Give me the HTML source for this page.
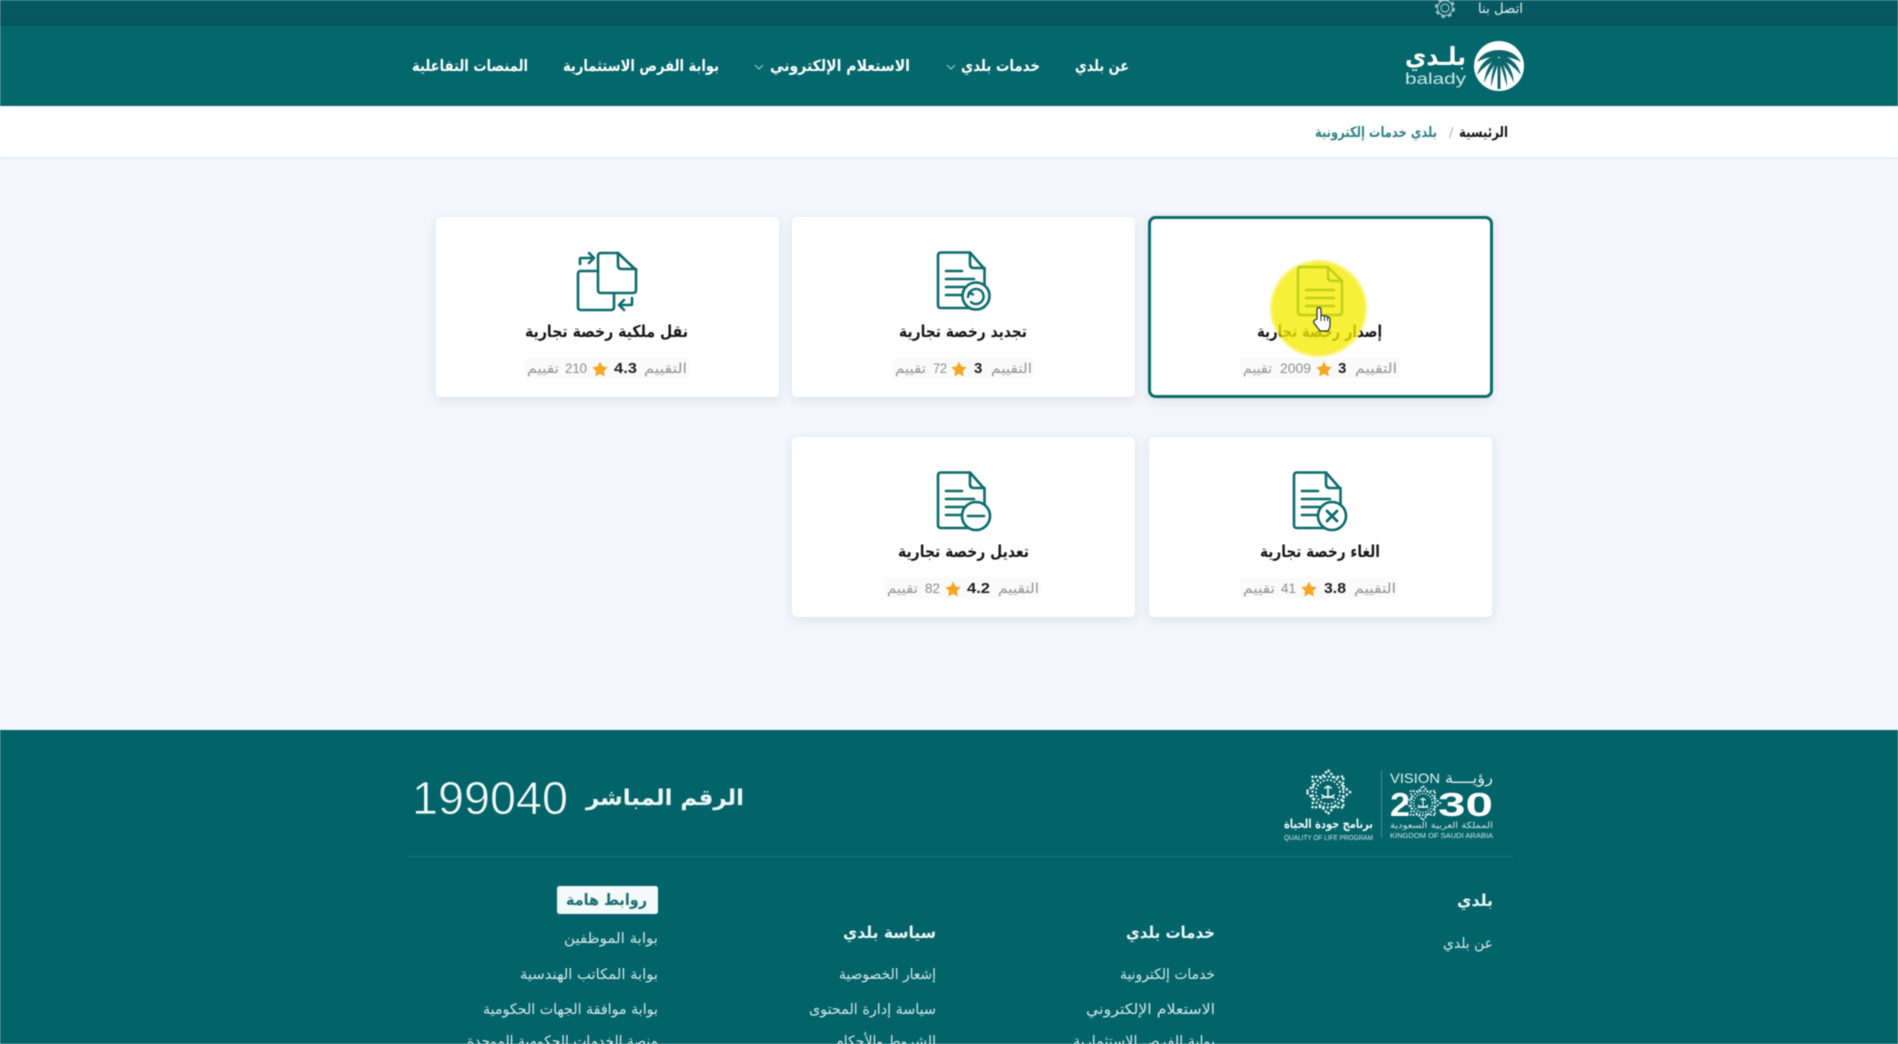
<!DOCTYPE html>
<html lang="ar"><head><meta charset="utf-8"><title>بلدي</title>
<style>
html,body{margin:0;padding:0;width:1898px;height:1044px;overflow:hidden;background:#f4f6fb}
svg{display:block;filter:blur(.5px)}
text{font-family:"DejaVu Sans","Liberation Sans",sans-serif;white-space:pre}
.n{fill:#fff;font-size:15.5px;font-weight:700}
.t{fill:#161616;font-size:16.5px;font-weight:700}
.l{fill:#929292;font-size:13.5px}
.d{fill:#8c8c8c;font-size:13.5px;font-family:"Liberation Sans",sans-serif}
.v{fill:#1c1c1c;font-size:15px;font-weight:700;font-family:"Liberation Sans",sans-serif}
.h{fill:#eef7f7;font-size:16.5px;font-weight:700}
.f{fill:#d3e8e9;font-size:14.5px}
.i{fill:none;stroke:#0c6b6c;stroke-width:2.6;stroke-linecap:round;stroke-linejoin:round}
</style></head><body>
<svg width="1898" height="1044" viewBox="0 0 1898 1044" xmlns="http://www.w3.org/2000/svg">
<defs>
<linearGradient id="top" x1="0" y1="0" x2="0" y2="1"><stop offset="0" stop-color="#075a63"/><stop offset="1" stop-color="#04575f"/></linearGradient>
<radialGradient id="yel"><stop offset="0" stop-color="#f4ec00"/><stop offset=".92" stop-color="#f4ec00"/><stop offset="1" stop-color="#f4ec00" stop-opacity=".35"/></radialGradient>
<filter id="sh" x="-10%" y="-10%" width="120%" height="125%"><feDropShadow dx="0" dy="3" stdDeviation="5" flood-color="#2a4060" flood-opacity=".12"/></filter>
<g id="doc" class="i"><path d="M4 1.5H33L47.5 18V54Q47.5 57 44.5 57H4Q1 57 1 54V4.5Q1 1.5 4 1.5Z"/><path d="M33 1.5V13Q33 17 37 17H47.5"/><path d="M9 20H25M9 28H37M9 36H27M9 44H25"/></g>
<g id="star" fill="none" stroke="#e4f1f1" stroke-linecap="round">
<polygon points="22,0 14.8,6.1 15.600,15.600 6.100,14.800 0,22 -6.100,14.800 -15.600,15.600 -14.800,6.100 -22,0 -14.800,-6.100 -15.600,-15.600 -6.100,-14.800 0,-22 6.100,-14.800 15.600,-15.600 14.800,-6.100" stroke-width="2.600" stroke-dasharray=".1 4"/>
<circle r="15.500" stroke-width="2.400" stroke-dasharray=".1 4"/>
<circle r="12" stroke-width="2" stroke-dasharray=".1 3.600"/>
<path d="M0 -6V3M-3 -4Q0 -7 3 -4M-6 3Q0 8 6 3M-6 6Q0 3 6 6" stroke-width="1.700"/>
</g>
</defs>

<rect width="1898" height="1044" fill="#f4f6fb"/>
<!-- header -->
<rect width="1898" height="27" fill="url(#top)"/>
<rect y="26" width="1898" height="80" fill="#04676c"/>
<rect y="106" width="1898" height="52" fill="#fff"/>
<rect y="157" width="1898" height="2" fill="#e9ecf1"/>

<text x="1478" y="13" textLength="45" lengthAdjust="spacingAndGlyphs" style="fill:#e6f2f2;font-size:13.5px">اتصل بنا</text>
<g fill="none" stroke="#9cc3c5"><circle cx="1445" cy="8" r="4" stroke-width="1.2"/><circle cx="1445" cy="8" r="7.5" stroke-width="1.2"/><circle cx="1445" cy="8" r="9" stroke-width="2.2" stroke-dasharray="3.5 3.6"/></g>

<!-- logo -->
<circle cx="1499" cy="66" r="25" fill="#fff"/>
<g fill="#0b666c">
<path d="M1497.500 89V58H1500.500V89Z"/>
<path d="M1499 50Q1484 50 1477 62Q1488 56 1499 57Q1510 56 1521 62Q1514 50 1499 50Z"/>
<path d="M1498 55Q1482 58 1477 75Q1486 64 1498 59Z"/>
<path d="M1500 55Q1516 58 1521 75Q1512 64 1500 59Z"/>
<path d="M1498 57Q1486 64 1484 83Q1490 69 1498.500 61Z"/>
<path d="M1500 57Q1512 64 1514 83Q1508 69 1499.500 61Z"/>
<path d="M1498 59Q1491 69 1491 87Q1495 72 1498.500 63Z"/>
<path d="M1500 59Q1507 69 1507 87Q1503 72 1499.500 63Z"/>
</g>
<text x="1405" y="65" textLength="61" lengthAdjust="spacingAndGlyphs" style="fill:#fff;font-size:25px;font-weight:700">بلـدي</text>
<text x="1405" y="84" textLength="61" lengthAdjust="spacingAndGlyphs" style="fill:#cfe6e6;font-size:15.5px;font-family:'Liberation Sans',sans-serif">balady</text>

<!-- nav -->
<text class="n" x="1075" y="71" textLength="54" lengthAdjust="spacingAndGlyphs">عن بلدي</text>
<text class="n" x="961" y="71" textLength="79" lengthAdjust="spacingAndGlyphs">خدمات بلدي</text>
<text class="n" x="770" y="71" textLength="140" lengthAdjust="spacingAndGlyphs">الاستعلام الإلكتروني</text>
<text class="n" x="563" y="71" textLength="156" lengthAdjust="spacingAndGlyphs">بوابة الفرص الاستثمارية</text>
<text class="n" x="412" y="71" textLength="116" lengthAdjust="spacingAndGlyphs">المنصات التفاعلية</text>
<path d="M947 65l4 4 4-4M755 65l4 4 4-4" fill="none" stroke="#a9cfd0" stroke-width="1"/>

<!-- breadcrumb -->
<text x="1459" y="137" textLength="49" lengthAdjust="spacingAndGlyphs" style="fill:#161616;font-size:14.5px;font-weight:700">الرئيسية</text>
<text x="1449" y="137" style="fill:#aab2b5;font-size:13px">/</text>
<text x="1315" y="137" textLength="122" lengthAdjust="spacingAndGlyphs" style="fill:#2f8387;font-size:14.5px;font-weight:700">بلدي خدمات إلكترونية</text>

<!-- cards -->
<g fill="#fff" filter="url(#sh)">
<rect x="792" y="217" width="343" height="180" rx="5"/>
<rect x="436" y="217" width="343" height="180" rx="5"/>
<rect x="1149" y="437" width="343" height="180" rx="5"/>
<rect x="792" y="437" width="343" height="180" rx="5"/>
<rect x="1149.5" y="217.5" width="342" height="179" rx="6" stroke="#0c6a6c" stroke-width="3"/>
</g>

<!-- rating backgrounds -->
<g fill="#fafafb">
<rect x="1240" y="358" width="160" height="20" rx="3"/>
<rect x="893" y="358" width="141" height="20" rx="3"/>
<rect x="525" y="358" width="164" height="20" rx="3"/>
<rect x="1240" y="578" width="158" height="20" rx="3"/>
<rect x="885" y="578" width="156" height="20" rx="3"/>
</g>

<!-- icons -->
<use href="#doc" x="937" y="251"/>
<circle cx="976" cy="296" r="13.500" fill="#fff" stroke="#0c6b6c" stroke-width="2.6"/>
<path class="i" d="M969 294A7.500 7.500 0 1 1 971 302M968 297l1-4.500 4 2" style="stroke-width:2.400"/>

<use href="#doc" x="1293" y="471"/>
<circle cx="1332" cy="516" r="14" fill="#fff" stroke="#0c6b6c" stroke-width="2.6"/>
<path class="i" d="M1327 511l10 10M1337 511l-10 10" style="stroke-width:2.800"/>

<use href="#doc" x="937" y="471"/>
<circle cx="976" cy="516" r="14" fill="#fff" stroke="#0c6b6c" stroke-width="2.6"/>
<path class="i" d="M968 516H984" style="stroke-width:2.600"/>

<g class="i">
<path d="M598 271H581Q578 271 578 274V307Q578 310 581 310H611Q614 310 614 307V293"/>
<path d="M601 253H618L636 270V290Q636 293 633 293H601Q598 293 598 290V256Q598 253 601 253Z" fill="#fff"/>
<path d="M618 253V265Q618 269 622 269H636"/>
<path d="M580 264V259Q580 258 581 258H593M589 253l5 5-5 5"/>
<path d="M632 298V304Q632 305 631 305H620M624 300l-5 5 5 5"/>
</g>

<g class="i" style="stroke-width:2.400"><path d="M1301 267H1328L1342 281V312Q1342 315 1339 315H1301Q1298 315 1298 312V270Q1298 267 1301 267Z"/><path d="M1328 267V277Q1328 281 1332 281H1342"/><path d="M1306 290H1334M1306 298H1334M1306 306H1334"/></g>

<!-- titles -->
<text class="t" x="1257" y="337" textLength="125" lengthAdjust="spacingAndGlyphs">إصدار رخصة تجارية</text>
<text class="t" x="899" y="337" textLength="128" lengthAdjust="spacingAndGlyphs">تجديد رخصة تجارية</text>
<text class="t" x="525" y="337" textLength="163" lengthAdjust="spacingAndGlyphs">نقل ملكية رخصة تجارية</text>
<text class="t" x="1260" y="557" textLength="120" lengthAdjust="spacingAndGlyphs">الغاء رخصة تجارية</text>
<text class="t" x="898" y="557" textLength="131" lengthAdjust="spacingAndGlyphs">تعديل رخصة تجارية</text>

<!-- ratings row 1 -->
<text class="l" x="1355" y="373" textLength="42" lengthAdjust="spacingAndGlyphs">التقييم</text>
<text class="v" x="1338" y="373">3</text>
<path d="M1324 361.500l2.400 4.900 5.400.800-3.900 3.800.900 5.400-4.800-2.500-4.800 2.500.900-5.400-3.900-3.800 5.400-.800z" fill="#f5a623"/>
<text class="d" x="1280" y="373" textLength="31" lengthAdjust="spacingAndGlyphs">2009</text>
<text class="l" x="1243" y="373" textLength="29" lengthAdjust="spacingAndGlyphs">تقييم</text>

<text class="l" x="991" y="373" textLength="41" lengthAdjust="spacingAndGlyphs">التقييم</text>
<text class="v" x="974" y="373">3</text>
<path d="M959 361.500l2.400 4.900 5.400.800-3.900 3.800.900 5.400-4.800-2.500-4.800 2.500.900-5.400-3.900-3.800 5.400-.800z" fill="#f5a623"/>
<text class="d" x="933" y="373" textLength="14" lengthAdjust="spacingAndGlyphs">72</text>
<text class="l" x="895" y="373" textLength="31" lengthAdjust="spacingAndGlyphs">تقييم</text>

<text class="l" x="644" y="373" textLength="43" lengthAdjust="spacingAndGlyphs">التقييم</text>
<text class="v" x="614" y="373" textLength="23" lengthAdjust="spacingAndGlyphs">4.3</text>
<path d="M600 361.500l2.400 4.900 5.400.800-3.900 3.800.900 5.400-4.800-2.500-4.800 2.500.900-5.400-3.900-3.800 5.400-.800z" fill="#f5a623"/>
<text class="d" x="565" y="373" textLength="22" lengthAdjust="spacingAndGlyphs">210</text>
<text class="l" x="527" y="373" textLength="32" lengthAdjust="spacingAndGlyphs">تقييم</text>

<!-- ratings row 2 -->
<text class="l" x="1354" y="593" textLength="42" lengthAdjust="spacingAndGlyphs">التقييم</text>
<text class="v" x="1324" y="593" textLength="22" lengthAdjust="spacingAndGlyphs">3.8</text>
<path d="M1309 581.500l2.400 4.900 5.400.800-3.900 3.800.900 5.400-4.800-2.500-4.800 2.500.900-5.400-3.900-3.800 5.400-.800z" fill="#f5a623"/>
<text class="d" x="1281" y="593" textLength="15" lengthAdjust="spacingAndGlyphs">41</text>
<text class="l" x="1243" y="593" textLength="32" lengthAdjust="spacingAndGlyphs">تقييم</text>

<text class="l" x="998" y="593" textLength="41" lengthAdjust="spacingAndGlyphs">التقييم</text>
<text class="v" x="967" y="593" textLength="23" lengthAdjust="spacingAndGlyphs">4.2</text>
<path d="M953 581.500l2.400 4.900 5.400.800-3.900 3.800.900 5.400-4.800-2.500-4.800 2.500.900-5.400-3.900-3.800 5.400-.800z" fill="#f5a623"/>
<text class="d" x="925" y="593" textLength="15" lengthAdjust="spacingAndGlyphs">82</text>
<text class="l" x="887" y="593" textLength="31" lengthAdjust="spacingAndGlyphs">تقييم</text>

<!-- cursor highlight -->
<circle cx="1318.500" cy="308.500" r="49" fill="url(#yel)" opacity=".78"/>
<path d="M1317 319V310Q1317 307.500 1319 307.500Q1321 307.500 1321 310V316Q1323 315 1324.500 316Q1326.500 315.500 1327.500 317Q1329.500 317 1330 319V325Q1330 328 1328 331H1320Q1317 327 1314 323Q1313 320.500 1315 320Z" fill="#fff" stroke="#2a2a2a" stroke-width="1.200" stroke-linejoin="round"/>
<path d="M1321 316V321M1324.500 316.500V321M1327.500 317.500V321" stroke="#2a2a2a" stroke-width="1" fill="none"/>

<!-- footer -->
<rect y="730" width="1898" height="314" fill="#026369"/>
<rect x="408" y="856" width="1105" height="1" fill="#1a777c"/>
<text x="412" y="814" textLength="156" lengthAdjust="spacingAndGlyphs" stroke="#026369" stroke-width=".7" style="fill:#f2fafa;font-size:46px;font-family:'Liberation Sans',sans-serif">199040</text>
<text x="586" y="805" textLength="158" lengthAdjust="spacingAndGlyphs" style="fill:#eef8f8;font-size:22px;font-weight:700">الرقم المباشر</text>

<!-- vision logos -->
<rect x="1381" y="770" width="1" height="68" fill="#4d9296"/>
<use href="#star" x="1328" y="792"/>
<use href="#star" transform="translate(1423 803) scale(.78)"/>
<text x="1284" y="828" textLength="89" lengthAdjust="spacingAndGlyphs" style="fill:#eef8f8;font-size:12.5px;font-weight:700">برنامج جودة الحياة</text>
<text x="1284" y="840" textLength="89" lengthAdjust="spacingAndGlyphs" style="fill:#cfe5e6;font-size:7px;font-family:'Liberation Sans',sans-serif">QUALITY OF LIFE PROGRAM</text>
<text x="1390" y="783" textLength="50" lengthAdjust="spacingAndGlyphs" style="fill:#e6f2f2;font-size:14px;font-family:'Liberation Sans',sans-serif">VISION</text>
<text x="1445" y="783" textLength="48" lengthAdjust="spacingAndGlyphs" style="fill:#e6f2f2;font-size:15px">رؤيــــة</text>
<text x="1390" y="816" textLength="20" lengthAdjust="spacingAndGlyphs" style="fill:#fff;font-size:33px;font-weight:700;font-family:'Liberation Sans',sans-serif">2</text>
<text x="1438" y="816" textLength="55" lengthAdjust="spacingAndGlyphs" style="fill:#fff;font-size:33px;font-weight:700;font-family:'Liberation Sans',sans-serif">30</text>
<text x="1390" y="828" textLength="103" lengthAdjust="spacingAndGlyphs" style="fill:#cfe5e6;font-size:8.5px">المملكة العربية السعودية</text>
<text x="1390" y="838" textLength="103" lengthAdjust="spacingAndGlyphs" style="fill:#cfe5e6;font-size:7px;font-family:'Liberation Sans',sans-serif">KINGDOM OF SAUDI ARABIA</text>

<!-- footer columns -->
<text class="h" x="1457" y="906" textLength="36" lengthAdjust="spacingAndGlyphs">بلدي</text>
<text class="f" x="1443" y="948" textLength="50" lengthAdjust="spacingAndGlyphs">عن بلدي</text>

<text class="h" x="1126" y="938" textLength="89" lengthAdjust="spacingAndGlyphs">خدمات بلدي</text>
<text class="f" x="1120" y="979" textLength="95" lengthAdjust="spacingAndGlyphs">خدمات إلكترونية</text>
<text class="f" x="1086" y="1014" textLength="129" lengthAdjust="spacingAndGlyphs">الاستعلام الإلكتروني</text>
<text class="f" x="1073" y="1046" textLength="142" lengthAdjust="spacingAndGlyphs">بوابة الفرص الاستثمارية</text>

<text class="h" x="843" y="938" textLength="93" lengthAdjust="spacingAndGlyphs">سياسة بلدي</text>
<text class="f" x="839" y="979" textLength="97" lengthAdjust="spacingAndGlyphs">إشعار الخصوصية</text>
<text class="f" x="809" y="1014" textLength="127" lengthAdjust="spacingAndGlyphs">سياسة إدارة المحتوى</text>
<text class="f" x="835" y="1046" textLength="101" lengthAdjust="spacingAndGlyphs">الشروط والأحكام</text>

<rect x="557" y="886" width="101" height="28" rx="2.500" fill="#f2fafa"/>
<text x="566" y="905" textLength="81" lengthAdjust="spacingAndGlyphs" style="fill:#1a6d72;font-size:15.5px;font-weight:700">روابط هامة</text>
<text class="f" x="564" y="943" textLength="94" lengthAdjust="spacingAndGlyphs">بوابة الموظفين</text>
<text class="f" x="520" y="979" textLength="138" lengthAdjust="spacingAndGlyphs">بوابة المكاتب الهندسية</text>
<text class="f" x="483" y="1014" textLength="175" lengthAdjust="spacingAndGlyphs">بوابة موافقة الجهات الحكومية</text>
<text class="f" x="467" y="1046" textLength="191" lengthAdjust="spacingAndGlyphs">منصة الخدمات الحكومية الموحدة</text>
</svg>
</body></html>
